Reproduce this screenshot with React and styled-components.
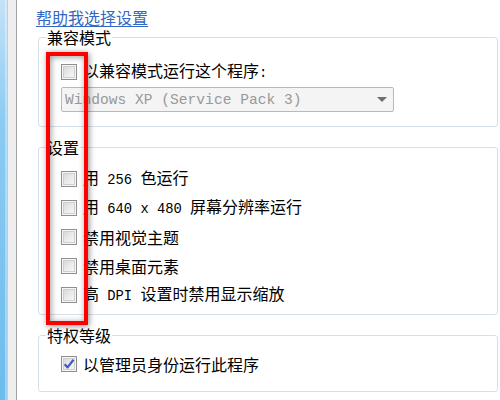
import React from 'react';
import styled, { createGlobalStyle } from 'styled-components';

const GlobalStyle = createGlobalStyle`
  html, body {
    margin: 0;
    padding: 0;
    background: #ffffff;
  }
  body {
    font-family: "Noto Sans CJK SC", "Noto Sans", sans-serif;
    color: #000;
  }
`;

// 整个页面：左侧窗口边框 + 右侧内容
const Page = styled.div`
  position: relative;
  width: 500px;
  height: 400px;
  display: flex;
  overflow: hidden;
  background: #fff;
`;

const BlueStrip = styled.div`
  width: 7px;
  background: linear-gradient(180deg, #c4e2f7 0%, #8ccbf2 30%, #6dbcee 100%);
  box-shadow: inset -2px 0 0 rgba(255, 255, 255, 0.35);
`;

const GrayStrip = styled.div`
  width: 8px;
  background: #eeeeee;
  border-left: 1px solid #b9cfdd;
  border-right: 1px solid #a3a3a3;
`;

const Content = styled.div`
  flex: 1;
  display: flex;
  flex-direction: column;
  padding: 8px 2px 0 19px;
`;

const HelpLink = styled.a`
  display: block;
  height: 18px;
  line-height: 18px;
  font-size: 16px;
  color: #3467c4;
  text-decoration: underline;
  text-underline-offset: 2px;
  cursor: pointer;
`;

const Group = styled.fieldset`
  margin: ${(p) => p.$gap}px 0 0 2px;
  padding: 0;
  border: 1px solid #d6e0e8;
  border-radius: 3px;
  min-width: 0;
`;

const Legend = styled.legend`
  margin-left: 7px;
  padding: 0 1px;
  height: 18px;
  line-height: 18px;
  font-size: 16px;
`;

const GroupBody = styled.div`
  display: flex;
  flex-direction: column;
  padding: ${(p) => p.$pad};
`;

const Row = styled.label`
  display: flex;
  align-items: center;
  gap: 6px;
  height: ${(p) => p.$h || 29}px;
  padding-left: 22px;
  font-size: 16px;
  line-height: 18px;
  white-space: pre;
`;

const Box = styled.span`
  flex: none;
  width: 16px;
  height: 16px;
  box-sizing: border-box;
  border: 1px solid #8f8f8f;
  background: linear-gradient(135deg, #d0d0d0 0%, #e8e8e8 45%, #fbfbfb 100%);
  box-shadow: inset 0 0 0 1px #f6f6f6, inset 0 0 0 2px #cfcfcf;
  display: flex;
  align-items: center;
  justify-content: center;
`;

const Ascii = styled.span`
  font-family: "Liberation Mono", monospace;
  font-size: 13.8px;
`;

const Select = styled.div`
  margin: 5px 0 0 22px;
  width: 333px;
  height: 25px;
  box-sizing: border-box;
  border: 1px solid #b9b9b9;
  border-radius: 2px;
  background: #f4f4f4;
  display: flex;
  align-items: center;
  padding: 0 6px 0 3px;
`;

const SelectText = styled.span`
  flex: 1;
  font-family: "Liberation Mono", monospace;
  font-size: 14.6px;
  color: #999999;
  white-space: nowrap;
`;

const Arrow = styled.span`
  width: 0;
  height: 0;
  border-left: 5px solid transparent;
  border-right: 5px solid transparent;
  border-top: 5px solid #6e6e6e;
`;

// 截图上的红色标注框
const Highlight = styled.div`
  position: absolute;
  left: 46px;
  top: 52px;
  width: 42px;
  height: 273px;
  box-sizing: border-box;
  border: 4px solid #ff0000;
  box-shadow: 1px 1px 6px rgba(0, 0, 0, 0.45), inset 1px 1px 6px rgba(0, 0, 0, 0.4);
  pointer-events: none;
`;

function Check({ checked }) {
  return (
    <Box>
      {checked && (
        <svg width="12" height="12" viewBox="0 0 11 11">
          <path d="M1.5 5.8 L4.2 8.6 L9.6 1.6" fill="none" stroke="#3d5bc2" strokeWidth="2" strokeLinejoin="round" />
        </svg>
      )}
    </Box>
  );
}

const settings = [
  <>用<Ascii> 256 </Ascii>色运行</>,
  <>用<Ascii> 640 x 480 </Ascii>屏幕分辨率运行</>,
  <>禁用视觉主题</>,
  <>禁用桌面元素</>,
  <>高<Ascii> DPI </Ascii>设置时禁用显示缩放</>,
];

export default function App() {
  return (
    <>
      <GlobalStyle />
      <Page>
        <BlueStrip />
        <GrayStrip />
        <Content>
          <HelpLink>帮助我选择设置</HelpLink>

          <Group $gap={2}>
            <Legend>兼容模式</Legend>
            <GroupBody $pad="16px 0 14px 0">
              <Row $h={20}>
                <Check />
                <span>以兼容模式运行这个程序<Ascii>:</Ascii></span>
              </Row>
              <Select>
                <SelectText>Windows XP (Service Pack 3)</SelectText>
                <Arrow />
              </Select>
            </GroupBody>
          </Group>

          <Group $gap={11}>
            <Legend>设置</Legend>
            <GroupBody $pad="8px 0 5px 0">
              {settings.map((s, i) => (
                <Row key={i}>
                  <Check />
                  <span>{s}</span>
                </Row>
              ))}
            </GroupBody>
          </Group>

          <Group $gap={11}>
            <Legend>特权等级</Legend>
            <GroupBody $pad="5px 0 13px 0">
              <Row>
                <Check checked />
                <span>以管理员身份运行此程序</span>
              </Row>
            </GroupBody>
          </Group>
        </Content>
        <Highlight />
      </Page>
    </>
  );
}
